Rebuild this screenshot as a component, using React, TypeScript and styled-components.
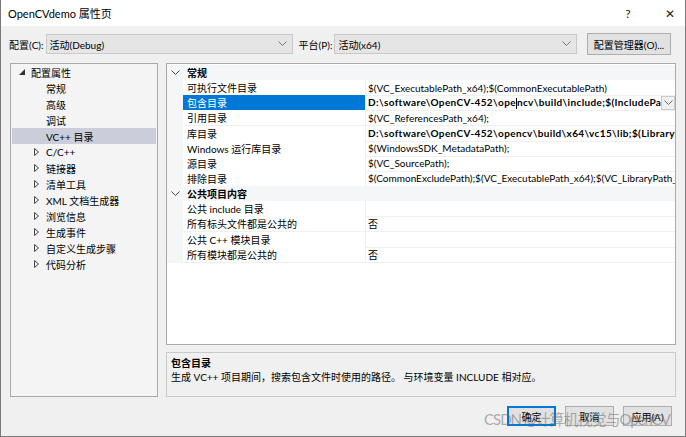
import styled, { createGlobalStyle } from "styled-components";

const GlobalStyle = createGlobalStyle`
  html, body {
    margin: 0;
    padding: 0;
    background: #ffffff;
  }
  body {
    font-family: "Lato", "Noto Sans CJK SC", sans-serif;
    font-size: 10px;
    color: #000000;
  }
  * {
    box-sizing: border-box;
  }
`;

const Window = styled.div`
  position: relative;
  width: 686px;
  height: 437px;
  display: flex;
  flex-direction: column;
  background: #f0f0f0;
  border: 1px solid #7a7a7a;
  border-top: none;
  overflow: hidden;
`;

const TitleBar = styled.div`
  height: 26px;
  flex: none;
  display: flex;
  align-items: center;
  gap: 12px;
  background: #ffffff;
  padding-left: 7px;
  font-size: 11px;
`;

const TitleText = styled.span`
  flex: 1;
`;

const TitleButton = styled.span`
  width: 30px;
  text-align: center;
  font-size: 12px;
  color: #222;
`;

const Toolbar = styled.div`
  display: flex;
  align-items: center;
  height: 22px;
  margin-top: 7px;
  padding: 0 14px 0 8px;
  white-space: nowrap;
`;

const Label = styled.span`
  flex: none;
  margin-right: 2px;
`;

const Select = styled.div<{ $width: number }>`
  flex: none;
  width: ${(p) => p.$width}px;
  height: 20px;
  display: flex;
  align-items: center;
  justify-content: space-between;
  background: #e5e5e5;
  border: 1px solid #c9c9c9;
  padding: 0 5px 0 3px;
  margin-right: 6px;
`;

const ToolButton = styled.div`
  flex: none;
  margin-left: auto;
  height: 22px;
  width: 84px;
  display: flex;
  align-items: center;
  justify-content: center;
  background: #e1e1e1;
  border: 1px solid #adadad;
`;

const Main = styled.div`
  display: flex;
  gap: 8px;
  height: 334px;
  margin-top: 8px;
  padding: 0 9px;
`;

const Tree = styled.div`
  width: 148px;
  flex: none;
  background: #f4f4f4;
  border: 1px solid #a9a9a9;
  padding: 0 1px;
`;

const TreeRow = styled.div<{ $level: number; $selected?: boolean }>`
  height: 16px;
  display: flex;
  align-items: center;
  white-space: nowrap;
  padding-left: ${(p) => (p.$level === 0 ? 7 : p.$level === 1 ? 34 : 22)}px;
  background: ${(p) => (p.$selected ? "#cbcdda" : "transparent")};
`;

const TreeToggle = styled.span`
  width: 12px;
  display: inline-flex;
  align-items: center;
`;

const RightColumn = styled.div`
  flex: 1;
  display: flex;
  flex-direction: column;
  gap: 7px;
`;

const Grid = styled.div`
  height: 283px;
  background: #ffffff;
  border: 1px solid #a9a9a9;
  padding-top: 1px;
  overflow: hidden;
`;

const GridRow = styled.div`
  display: grid;
  grid-template-columns: 16px 183px 1fr;
  height: 15.15px;
`;

const Gutter = styled.div`
  background: #f5f6f8;
  display: flex;
  align-items: center;
  justify-content: center;
`;

const CategoryCell = styled.div`
  grid-column: 2 / 4;
  background: #f5f6f8;
  font-weight: bold;
  display: flex;
  align-items: center;
  padding-left: 4px;
`;

const NameCell = styled.div<{ $selected?: boolean }>`
  display: flex;
  align-items: center;
  padding-left: 4px;
  background: ${(p) => (p.$selected ? "#0078d7" : "#ffffff")};
  color: ${(p) => (p.$selected ? "#ffffff" : "#000000")};
  border-bottom: 1px solid #f0f0f0;
  border-right: 1px solid #f0f0f0;
  white-space: nowrap;
`;

const ValueCell = styled.div<{ $bold?: boolean }>`
  display: flex;
  align-items: center;
  padding-left: 2px;
  font-weight: ${(p) => (p.$bold ? "bold" : "normal")};
  letter-spacing: ${(p) => (p.$bold ? "0.36px" : "0")};
  border-bottom: 1px solid #f0f0f0;
  white-space: nowrap;
  overflow: hidden;
`;

const ValueText = styled.span`
  flex: 1;
  overflow: hidden;
`;

const Caret = styled.span`
  display: inline-block;
  width: 1px;
  height: 11px;
  background: #000;
  vertical-align: middle;
`;

const DropButton = styled.span`
  flex: none;
  width: 14px;
  height: 14px;
  display: flex;
  align-items: center;
  justify-content: center;
  background: #f0f0f0;
  border: 1px solid #c9c9c9;
`;

const Description = styled.div`
  height: 45px;
  border: 1px solid #c9c9c9;
  background: #f0f0f0;
  padding: 3px 4px;
  line-height: 14px;
`;

const DescTitle = styled.div`
  font-weight: bold;
`;

const Footer = styled.div`
  display: flex;
  justify-content: flex-end;
  gap: 9px;
  margin-top: 9px;
  padding-right: 13px;
`;

const Button = styled.div<{ $primary?: boolean }>`
  width: 49px;
  height: 20px;
  display: flex;
  align-items: center;
  justify-content: center;
  background: #e1e1e1;
  border: ${(p) => (p.$primary ? "2px solid #0078d7" : "1px solid #adadad")};
`;

const Watermark = styled.div`
  position: absolute;
  left: 483px;
  top: 410px;
  font-family: "Lato", "Noto Sans CJK SC", sans-serif;
  font-size: 15px;
  line-height: 18px;
  letter-spacing: -1px;
  color: rgba(110, 110, 110, 0.55);
  white-space: nowrap;
  pointer-events: none;
`;

const ChevronDown = ({ color = "#555" }: { color?: string }) => (
  <svg width="9" height="6" viewBox="0 0 9 6">
    <path d="M0.5 0.5 L4.5 4.5 L8.5 0.5" fill="none" stroke={color} strokeWidth="1" />
  </svg>
);

const Expanded = () => (
  <svg width="6" height="6" viewBox="0 0 6 6">
    <path d="M6 0 L6 6 L0 6 Z" fill="#333" />
  </svg>
);

const Collapsed = () => (
  <svg width="5" height="8" viewBox="0 0 5 8">
    <path d="M0.5 0.5 L4.5 4 L0.5 7.5 Z" fill="none" stroke="#444" strokeWidth="1" />
  </svg>
);

const treeChildren = ["常规", "高级", "调试", "VC++ 目录"];
const treeCollapsed = [
  "C/C++",
  "链接器",
  "清单工具",
  "XML 文档生成器",
  "浏览信息",
  "生成事件",
  "自定义生成步骤",
  "代码分析",
];

type Prop = { name: string; value: string; bold?: boolean; selected?: boolean };

const general: Prop[] = [
  { name: "可执行文件目录", value: "$(VC_ExecutablePath_x64);$(CommonExecutablePath)" },
  { name: "包含目录", value: "", bold: true, selected: true },
  { name: "引用目录", value: "$(VC_ReferencesPath_x64);" },
  {
    name: "库目录",
    value: "D:\\software\\OpenCV-452\\opencv\\build\\x64\\vc15\\lib;$(LibraryPath)",
    bold: true,
  },
  { name: "Windows 运行库目录", value: "$(WindowsSDK_MetadataPath);" },
  { name: "源目录", value: "$(VC_SourcePath);" },
  {
    name: "排除目录",
    value: "$(CommonExcludePath);$(VC_ExecutablePath_x64);$(VC_LibraryPath_x64)",
  },
];

const publicItems: Prop[] = [
  { name: "公共 include 目录", value: "" },
  { name: "所有标头文件都是公共的", value: "否" },
  { name: "公共 C++ 模块目录", value: "" },
  { name: "所有模块都是公共的", value: "否" },
];

const PropRow = ({ p }: { p: Prop }) => (
  <GridRow>
    <Gutter />
    <NameCell $selected={p.selected}>{p.name}</NameCell>
    <ValueCell $bold={p.bold}>
      {p.selected ? (
        <>
          <ValueText>
            D:\software\OpenCV-452\ope
            <Caret />
            ncv\build\include;$(IncludePath)
          </ValueText>
          <DropButton>
            <ChevronDown color="#666" />
          </DropButton>
        </>
      ) : (
        <ValueText>{p.value}</ValueText>
      )}
    </ValueCell>
  </GridRow>
);

const Category = ({ title }: { title: string }) => (
  <GridRow>
    <Gutter>
      <ChevronDown color="#444" />
    </Gutter>
    <CategoryCell>{title}</CategoryCell>
  </GridRow>
);

export default function App() {
  return (
    <>
      <GlobalStyle />
      <Window>
        <TitleBar>
          <TitleText>OpenCVdemo 属性页</TitleText>
          <TitleButton>?</TitleButton>
          <TitleButton>✕</TitleButton>
        </TitleBar>
        <Toolbar>
          <Label>配置(C):</Label>
          <Select $width={247}>
            <span>活动(Debug)</span>
            <ChevronDown color="#777" />
          </Select>
          <Label>平台(P):</Label>
          <Select $width={243}>
            <span>活动(x64)</span>
            <ChevronDown color="#777" />
          </Select>
          <ToolButton>配置管理器(O)...</ToolButton>
        </Toolbar>
        <Main>
          <Tree>
            <TreeRow $level={0}>
              <TreeToggle>
                <Expanded />
              </TreeToggle>
              <span>配置属性</span>
            </TreeRow>
            {treeChildren.map((t, i) => (
              <TreeRow key={t} $level={1} $selected={i === 3}>
                {t}
              </TreeRow>
            ))}
            {treeCollapsed.map((t) => (
              <TreeRow key={t} $level={2}>
                <TreeToggle>
                  <Collapsed />
                </TreeToggle>
                <span>{t}</span>
              </TreeRow>
            ))}
          </Tree>
          <RightColumn>
            <Grid>
              <Category title="常规" />
              {general.map((p) => (
                <PropRow key={p.name} p={p} />
              ))}
              <Category title="公共项目内容" />
              {publicItems.map((p) => (
                <PropRow key={p.name} p={p} />
              ))}
            </Grid>
            <Description>
              <DescTitle>包含目录</DescTitle>
              <div>生成 VC++ 项目期间，搜索包含文件时使用的路径。 与环境变量 INCLUDE 相对应。</div>
            </Description>
          </RightColumn>
        </Main>
        <Footer>
          <Button $primary>确定</Button>
          <Button>取消</Button>
          <Button>应用(A)</Button>
        </Footer>
        <Watermark>CSDN @计算机视觉与OpenCV</Watermark>
      </Window>
    </>
  );
}
